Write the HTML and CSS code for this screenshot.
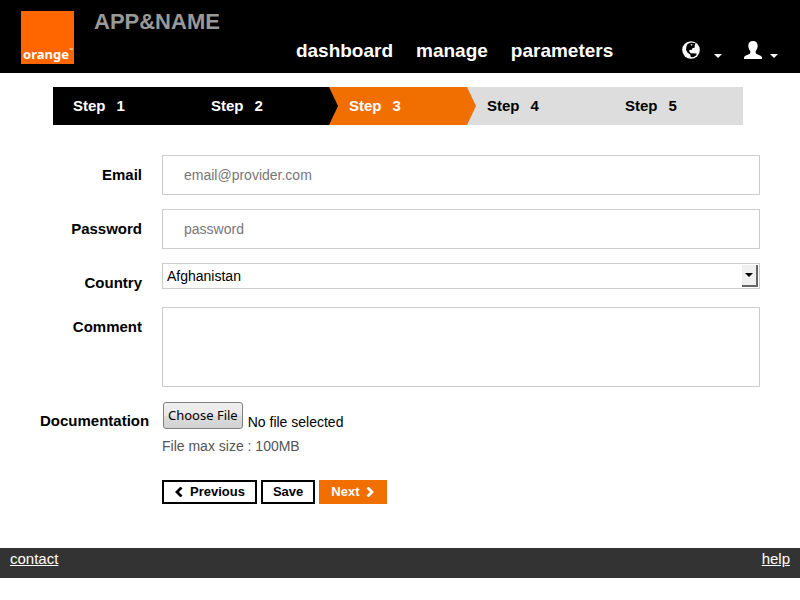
FILE: index.html
```html
<!DOCTYPE html>
<html lang="en">
<head>
<meta charset="utf-8">
<title>APP&amp;NAME</title>
<link rel="stylesheet" href="styles.css">
</head>
<body>
<header class="header">
  <a class="logo" href="#">orange<span class="logo-tm">™</span></a>
  <div class="brand">APP&amp;NAME</div>
  <nav class="nav">
    <a href="#">dashboard</a>
    <a href="#">manage</a>
    <a href="#">parameters</a>
  </nav>
  <div class="tools">
    <button class="tool" type="button" aria-label="Language">
      <svg class="globe" viewBox="0 0 18 18" width="18" height="18"><circle cx="9" cy="9" r="8.8" fill="#fff"/><path d="M5.500 3 9 1.600 13.500 2.200 12.800 4.400 12.600 6.800 10.600 7 9.600 9 8 8.800 7 10 8 11.400 8.800 12.200 14.600 12.400 14.400 14.200 11.200 16.200 8.800 16 8.200 13.600 5.400 11.600 4 8.600 4.400 5.400Z" fill="#000"/><path d="M8.400 3.600 10.400 3 10 5Z" fill="#fff"/></svg>
      <svg class="caret" viewBox="0 0 8 4" width="8" height="4"><path d="M0 0h8L4 4Z" fill="#fff"/></svg>
    </button>
    <button class="tool tool-user" type="button" aria-label="Account">
      <svg class="user" viewBox="0 0 18 18" width="18" height="18"><path d="M9 0c2.900 0 4.700 2 4.700 4.800 0 2.200-.9 4-2 5.200v1.800c0 .6.4 1 1 1.300l3.900 1.700c1 .5 1.400 1.200 1.400 2.200v1H0v-1c0-1 .4-1.700 1.400-2.200l3.900-1.700c.6-.3 1-.7 1-1.300V10c-1.100-1.200-2-3-2-5.200C4.300 2 6.100 0 9 0Z" fill="#fff"/></svg>
      <svg class="caret" viewBox="0 0 8 4" width="8" height="4"><path d="M0 0h8L4 4Z" fill="#fff"/></svg>
    </button>
  </div>
</header>
<main>
  <ol class="steps">
    <li class="step done">Step<span>1</span></li>
    <li class="step done">Step<span>2</span></li>
    <li class="step current" aria-current="step">Step<span>3</span></li>
    <li class="step">Step<span>4</span></li>
    <li class="step">Step<span>5</span></li>
  </ol>
  <form class="form">
    <div class="row">
      <label class="label" for="email">Email</label>
      <input class="input" id="email" type="email" placeholder="email@provider.com">
    </div>
    <div class="row">
      <label class="label" for="password">Password</label>
      <input class="input" id="password" type="password" placeholder="password">
    </div>
    <div class="row row-country">
      <label class="label" for="country">Country</label>
      <div class="select-wrap">
        <select class="select" id="country"><option>Afghanistan</option></select>
        <span class="select-arrow"><svg viewBox="0 0 8 4" width="8" height="4"><path d="M0 0h8L4 4Z" fill="#000"/></svg></span>
      </div>
    </div>
    <div class="row">
      <label class="label" for="comment">Comment</label>
      <textarea class="textarea" id="comment"></textarea>
    </div>
    <div class="row">
      <label class="label" for="documentation">Documentation</label>
      <div>
        <div class="file">
          <span class="file-button">Choose File</span>
          <span class="file-name">No file selected</span>
          <input class="file-input" id="documentation" type="file">
        </div>
        <p class="help">File max size : 100MB</p>
        <div class="actions">
          <button class="btn" type="button"><svg viewBox="0 0 10 10" width="10" height="10"><path d="M7.500 0.500 3 5l4.500 4.500" fill="none" stroke="currentColor" stroke-width="2.800"/></svg>Previous</button>
          <button class="btn" type="button">Save</button>
          <button class="btn btn-primary" type="submit">Next<svg viewBox="0 0 10 10" width="10" height="10"><path d="M2.500 0.500 7 5 2.500 9.500" fill="none" stroke="currentColor" stroke-width="2.800"/></svg></button>
        </div>
      </div>
    </div>
  </form>
</main>
<footer class="footer">
  <a href="#">contact</a>
  <a href="#">help</a>
</footer>
</body>
</html>
```
FILE: styles.css
```css
* {
  box-sizing: border-box;
}

body {
  margin: 0;
  background: #fff;
  color: #000;
  font: 14px/20px "Liberation Sans", Arial, sans-serif;
}

input, select, textarea, button {
  font: inherit;
}

.header {
  display: flex;
  align-items: flex-start;
  padding: 11px 22px 9px 21px;
  background: #000;
  color: #fff;
}

.logo {
  position: relative;
  width: 53px;
  height: 53px;
  padding: 34px 0 0 2px;
  background: #ff6600;
  color: #fff;
  font: bold 13px/18px "Noto Sans", sans-serif;
  text-decoration: none;
}

.logo-tm {
  position: absolute;
  top: 35px;
  right: 1px;
  font-size: 5px;
  line-height: 8px;
}

.brand {
  margin-left: 20px;
  color: #999;
  font-size: 22px;
  font-weight: bold;
  line-height: 22px;
}

.nav {
  display: flex;
  gap: 23px;
  margin: 28px auto 0 76px;
  font-size: 19px;
  font-weight: bold;
  line-height: 24px;
}

.nav a {
  color: #fff;
  text-decoration: none;
}

.tools {
  display: flex;
  gap: 22px;
  padding-top: 30px;
}

.tool {
  display: flex;
  align-items: flex-end;
  gap: 14px;
  padding: 0;
  border: 0;
  background: none;
}

.tool-user {
  gap: 8px;
}

.caret {
  margin-bottom: 1px;
}

.steps {
  display: flex;
  margin: 14px 57px 30px 53px;
  padding: 0;
  list-style: none;
  background: #ddd;
  font-size: 15px;
  font-weight: bold;
  line-height: 38px;
}

.step {
  position: relative;
  flex: 1;
  padding-left: 20px;
}

.step span {
  margin-left: 11px;
}

.done {
  background: #000;
  color: #fff;
}

.current {
  background: #f16e00;
  color: #fff;
}

.current::before,
.current::after {
  content: "";
  position: absolute;
  top: 0;
  left: 0;
  width: 9px;
  height: 100%;
  background: #000;
  clip-path: polygon(0 0, 100% 50%, 0 100%);
}

.current::after {
  left: 100%;
  background: #f16e00;
}

.form {
  padding: 0 40px;
}

.row {
  display: grid;
  grid-template-columns: 102px 1fr;
  column-gap: 20px;
  align-items: start;
  margin-bottom: 14px;
}

.label {
  padding-top: 10px;
  font-size: 15px;
  font-weight: bold;
  text-align: right;
  white-space: nowrap;
}

.input,
.select,
.textarea {
  display: block;
  width: 100%;
  border: 1px solid #ccc;
  border-radius: 0;
  background: #fff;
  color: #000;
}

.input {
  height: 40px;
  padding: 0 21px;
}

.input::placeholder {
  color: #777;
}

.select-wrap {
  position: relative;
}

.select {
  height: 26px;
  padding: 0 4px;
  appearance: none;
}

.select-arrow {
  position: absolute;
  top: 2px;
  right: 2px;
  display: flex;
  align-items: center;
  justify-content: center;
  width: 16px;
  height: 22px;
  border: solid #666;
  border-width: 0 2px 2px 0;
  background: #f0f0f0;
  pointer-events: none;
}

.textarea {
  height: 80px;
  resize: none;
}

.file {
  position: relative;
  display: flex;
  align-items: flex-end;
  gap: 5px;
  margin: 1px 1px 0;
}

.file-button {
  padding: 0 4px;
  border: 1px solid #808080;
  border-radius: 3px;
  background: linear-gradient(#f0f0f0, #e8e8e8 50%, #dcdcdc 50%, #d2d2d2);
  font: 13px/25px "Noto Sans", sans-serif;
}

.file-name {
  line-height: 14px;
}

.file-input {
  position: absolute;
  inset: 0;
  width: 100%;
  opacity: 0;
}

.help {
  margin: 7px 0 24px;
  color: #555;
}

.actions {
  display: flex;
  gap: 4px;
}

.btn {
  display: flex;
  align-items: center;
  gap: 6px;
  padding: 0 10px;
  border: 2px solid #000;
  background: #fff;
  color: #000;
  font-size: 13px;
  font-weight: bold;
  line-height: 20px;
}

.btn-primary {
  border-color: #f16e00;
  background: #f16e00;
  color: #fff;
}

.footer {
  display: flex;
  justify-content: space-between;
  margin-top: 44px;
  padding: 0 10px 9px;
  background: #333;
  font-size: 15px;
  line-height: 21px;
}

.footer a {
  color: #fff;
}
```
